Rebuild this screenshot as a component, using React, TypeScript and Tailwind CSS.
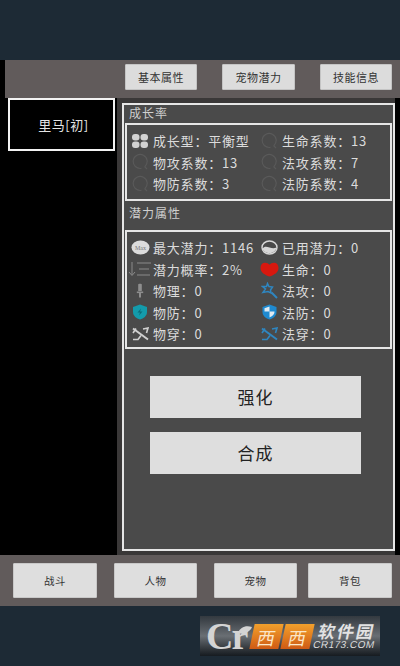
import React from 'react';

const CJK = '"Noto Sans CJK SC", "Liberation Sans", sans-serif';

const Ring = () => (
  <svg width="18" height="18" viewBox="0 0 18 18" fill="none" stroke="#5a5a5a" strokeWidth="1.1">
    <path d="M14 13.500A7 7 0 1 0 10.500 15.300" />
    <path d="M13.500 13.500l2.500 2.500" />
  </svg>
);

const Clover = () => (
  <svg width="18" height="16" viewBox="0 0 18 16" fill="#d2d2d2">
    <rect x="1" y="1" width="7.500" height="6.500" rx="3" />
    <rect x="9.500" y="1" width="7.500" height="6.500" rx="3" />
    <rect x="1" y="8.500" width="7.500" height="6.500" rx="3" />
    <rect x="9.500" y="8.500" width="7.500" height="6.500" rx="3" />
  </svg>
);

const MaxIcon = () => (
  <svg width="19" height="15" viewBox="0 0 19 15">
    <ellipse cx="9.500" cy="7.500" rx="9" ry="7" fill="#dcdcdc" />
    <text x="9.500" y="9.800" textAnchor="middle" fontSize="6" fill="#777" fontFamily="Liberation Serif, serif">Max</text>
  </svg>
);

const UsedIcon = () => (
  <svg width="17" height="15" viewBox="0 0 17 15">
    <ellipse cx="8.500" cy="7.500" rx="7.500" ry="6.500" fill="#4a4a4a" stroke="#d8d8d8" strokeWidth="1.400" />
    <path d="M1.500 8.500c2-2.500 4-2 7-1s5 1 7 0c-.5 3.500-3.500 5.500-7 5.500s-6.500-2-7-4.500z" fill="#d8d8d8" />
  </svg>
);

const SortIcon = () => (
  <svg width="24" height="16" viewBox="0 0 24 16" fill="none" stroke="#8a8a8a" strokeWidth="1">
    <path d="M4 1v13M1 11l3 3.500L7 11" />
    <path d="M9 2h14M11 8h10M9 14h13" />
  </svg>
);

const Heart = () => (
  <svg width="19" height="15" viewBox="0 0 19 15" fill="#d8180f">
    <path d="M9.500 14.500C5 13 .5 10.500.5 6 .5 2.500 2.500.8 5 .8c2 0 3.500.7 4.500 2 1-1.300 2.500-2 4.500-2 2.500 0 4.500 1.700 4.500 5.200 0 4.500-4.500 7-9 8.500z" />
  </svg>
);

const Sword = () => (
  <svg width="8" height="15" viewBox="0 0 8 15" fill="#8e8e8e">
    <path d="M2.200 1.500C2.200.6 5.800.6 5.800 1.500V8H2.200z" />
    <rect x=".8" y="8.500" width="6.400" height="1.600" />
    <rect x="3" y="10" width="2" height="4.500" />
  </svg>
);

const Wand = () => (
  <svg width="17" height="17" viewBox="0 0 17 17" fill="none" stroke="#2f86c0" strokeWidth="1.500">
    <path d="M6.500 1.500l1.500 3 3.500.5-2 3 .5 3-3-1.500-5 1 2.500-3.500-3-2.500 4 0z" />
    <path d="M10.500 10.500l5.500 5.500" strokeWidth="2" />
  </svg>
);

const TealShield = () => (
  <svg width="16" height="16" viewBox="0 0 16 16">
    <path d="M8 .5l7 2.500v5c0 4-3.500 6.500-7 7.500C4.500 14.500 1 12 1 8V3z" fill="#139bab" />
    <path d="M9 4.500L5.500 8.500h2.500L7 11.500l3.500-4H8z" fill="#0b6c78" />
  </svg>
);

const BlueShield = () => (
  <svg width="15" height="16" viewBox="0 0 15 16">
    <path d="M7.500.5l7 2.500v5c0 4-3.500 6.500-7 7.500C4 14.500.5 12 .5 8V3z" fill="#1f8ad0" />
    <path d="M7.500 2.500L2.500 4.200V7.500h5zM7.500 7.500v6c2.500-1 5-2.800 5-6z" fill="#dfeaf2" />
  </svg>
);

const Pierce = ({ color }: { color: string }) => (
  <svg width="17" height="14" viewBox="0 0 17 14" fill="none" stroke={color} strokeWidth="1.600">
    <path d="M1 1.500l15 11" strokeWidth="2" />
    <path d="M1 12.500h5l3-4M1 6l3-4.500M11 2l5-1-1.500 5" />
  </svg>
);

const Leaf = () => (
  <svg className="absolute left-[38px] top-[9px]" width="14" height="10" viewBox="0 0 14 10" fill="#d4d4d4">
    <path d="M0 8C2 2 8 0 14 2 12 7 6 10 0 8z" />
  </svg>
);

// one icon + text cell, icon column is fixed so labels line up
const Cell = ({ icon, text, wide }: { icon: React.ReactNode; text: string; wide?: boolean }) => (
  <div className={`flex items-center ${wide ? 'w-[129px]' : 'w-[128px]'}`}>
    <div className="w-[26px] flex items-center justify-center shrink-0">{icon}</div>
    <span className="text-[13px] leading-none tracking-[.8px] text-[#dcdcdc] whitespace-nowrap">{text}</span>
  </div>
);

const growth: [React.ReactNode, string, React.ReactNode, string][] = [
  [<Clover />, '成长型\uFF1A平衡型', <Ring />, '生命系数\uFF1A13'],
  [<Ring />, '物攻系数\uFF1A13', <Ring />, '法攻系数\uFF1A7'],
  [<Ring />, '物防系数\uFF1A3', <Ring />, '法防系数\uFF1A4'],
];

const potential: [React.ReactNode, string, React.ReactNode, string][] = [
  [<MaxIcon />, '最大潜力\uFF1A1146', <UsedIcon />, '已用潜力\uFF1A0'],
  [<SortIcon />, '潜力概率\uFF1A2%', <Heart />, '生命\uFF1A0'],
  [<Sword />, '物理\uFF1A0', <Wand />, '法攻\uFF1A0'],
  [<TealShield />, '物防\uFF1A0', <BlueShield />, '法防\uFF1A0'],
  [<Pierce color="#d0d0d0" />, '物穿\uFF1A0', <Pierce color="#2f86c0" />, '法穿\uFF1A0'],
];

const StatRows = ({ rows }: { rows: [React.ReactNode, string, React.ReactNode, string][] }) => (
  <div className="flex flex-col gap-[6.500px]">
    {rows.map(([a, at, b, bt]) => (
      <div key={at} className="flex h-[15px] items-center">
        <Cell icon={a} text={at} wide />
        <Cell icon={b} text={bt} />
      </div>
    ))}
  </div>
);

const TopButton = ({ label, w }: { label: string; w: string }) => (
  <button className={`${w} h-[26px] bg-[#dcdcdc] border border-[#c4c4c4] rounded-[1px] text-[11px] tracking-[.5px] text-[#333]`}>{label}</button>
);

const NavButton = ({ label, w }: { label: string; w: string }) => (
  <button className={`${w} h-[35px] bg-[#dedede] border border-[#c8c8c8] rounded-[1px] text-[10.500px] tracking-[.5px] text-[#333]`}>{label}</button>
);

const BigButton = ({ label }: { label: string }) => (
  <button className="w-[211px] h-[42px] bg-[#dedede] text-[17px] tracking-[1px] text-[#222]">{label}</button>
);

const Logo = () => (
  <div className="relative w-[180px] h-[40px] flex items-center bg-gradient-to-b from-[#33393f] via-[#6a6f74] to-[#161b20]">
    <span className="w-[52px] pl-[6px] text-[38px] leading-[40px] font-bold tracking-[-2px] text-[#d4d4d4] whitespace-nowrap" style={{ fontFamily: '"Liberation Serif", serif' }}>Cr</span>
    <Leaf />
    <div className="flex gap-[2px] -skew-x-12">
      <span className="w-[29px] h-[25px] flex items-center justify-center bg-gradient-to-b from-[#f2a02c] to-[#cf5a14] text-[18px] leading-none text-[#fbe6c8]">西</span>
      <span className="w-[29px] h-[25px] flex items-center justify-center bg-gradient-to-b from-[#f2a02c] to-[#cf5a14] text-[18px] leading-none text-[#fbe6c8]">西</span>
    </div>
    <div className="ml-[3px] flex flex-col items-center -skew-x-12">
      <span className="text-[17px] leading-[18px] font-bold tracking-[2px] text-[#e2e2e2]">软件园</span>
      <span className="text-[10px] leading-[10px] tracking-[.5px] text-[#dcdcdc]" style={{ fontFamily: '"Liberation Sans", sans-serif' }}>CR173.COM</span>
    </div>
  </div>
);

export default function App() {
  return (
    <div className="w-[400px] h-[666px] flex flex-col bg-[#1d2a35]" style={{ fontFamily: CJK }}>
      <div className="h-[60px] shrink-0" />

      <div className="h-[546px] shrink-0 flex flex-col bg-black">
        <div className="h-[38px] ml-[5px] bg-[#615b5b] flex pt-[4px] pl-[120px] shrink-0">
          <TopButton label="基本属性" w="w-[72px] mr-[25px]" />
          <TopButton label="宠物潜力" w="w-[73px] mr-[25px]" />
          <TopButton label="技能信息" w="w-[72px]" />
        </div>

        <div className="flex flex-1 min-h-0">
          <div className="w-[117px] shrink-0 pl-[8px] pr-[2px]">
            <div className="h-[53px] border-2 border-[#f2f2f2] pl-[4px] flex items-center justify-center text-[13px] tracking-[.5px] text-[#e4e4e4]">里马[初]</div>
          </div>
          <div className="w-[278px] shrink-0 pl-[5px] pt-[5px] pb-[4px] bg-[#3a3838]">
            <div className="h-full border-2 border-[#e6e6e6] bg-[#4a4a4a] flex flex-col">
              <div className="h-[18px] pl-[5px] text-[12px] leading-[16px] tracking-[1px] text-[#cfcfcf] shrink-0">成长率</div>
              <div className="h-[78px] mx-px border-2 border-[#e6e6e6] pt-[8px] shrink-0">
                <StatRows rows={growth} />
              </div>
              <div className="h-[29px] pl-[5px] pt-[4px] text-[12px] leading-[16px] tracking-[1px] text-[#cfcfcf] shrink-0">潜力属性</div>
              <div className="h-[119px] mx-px border-2 border-[#e6e6e6] pt-[8px] shrink-0">
                <StatRows rows={potential} />
              </div>
              <div className="flex flex-col items-center gap-[14px] pt-[27px] pr-[6px]">
                <BigButton label="强化" />
                <BigButton label="合成" />
              </div>
            </div>
          </div>
        </div>

        <div className="h-[51px] bg-[#615b5b] flex pt-[8px] pl-[13px] shrink-0">
          <NavButton label="战斗" w="w-[84px] mr-[17px]" />
          <NavButton label="人物" w="w-[83px] mr-[17px]" />
          <NavButton label="宠物" w="w-[83px] mr-[11px]" />
          <NavButton label="背包" w="w-[84px]" />
        </div>
      </div>

      <div className="flex-1 pt-[10px] pl-[200px]">
        <Logo />
      </div>
    </div>
  );
}
